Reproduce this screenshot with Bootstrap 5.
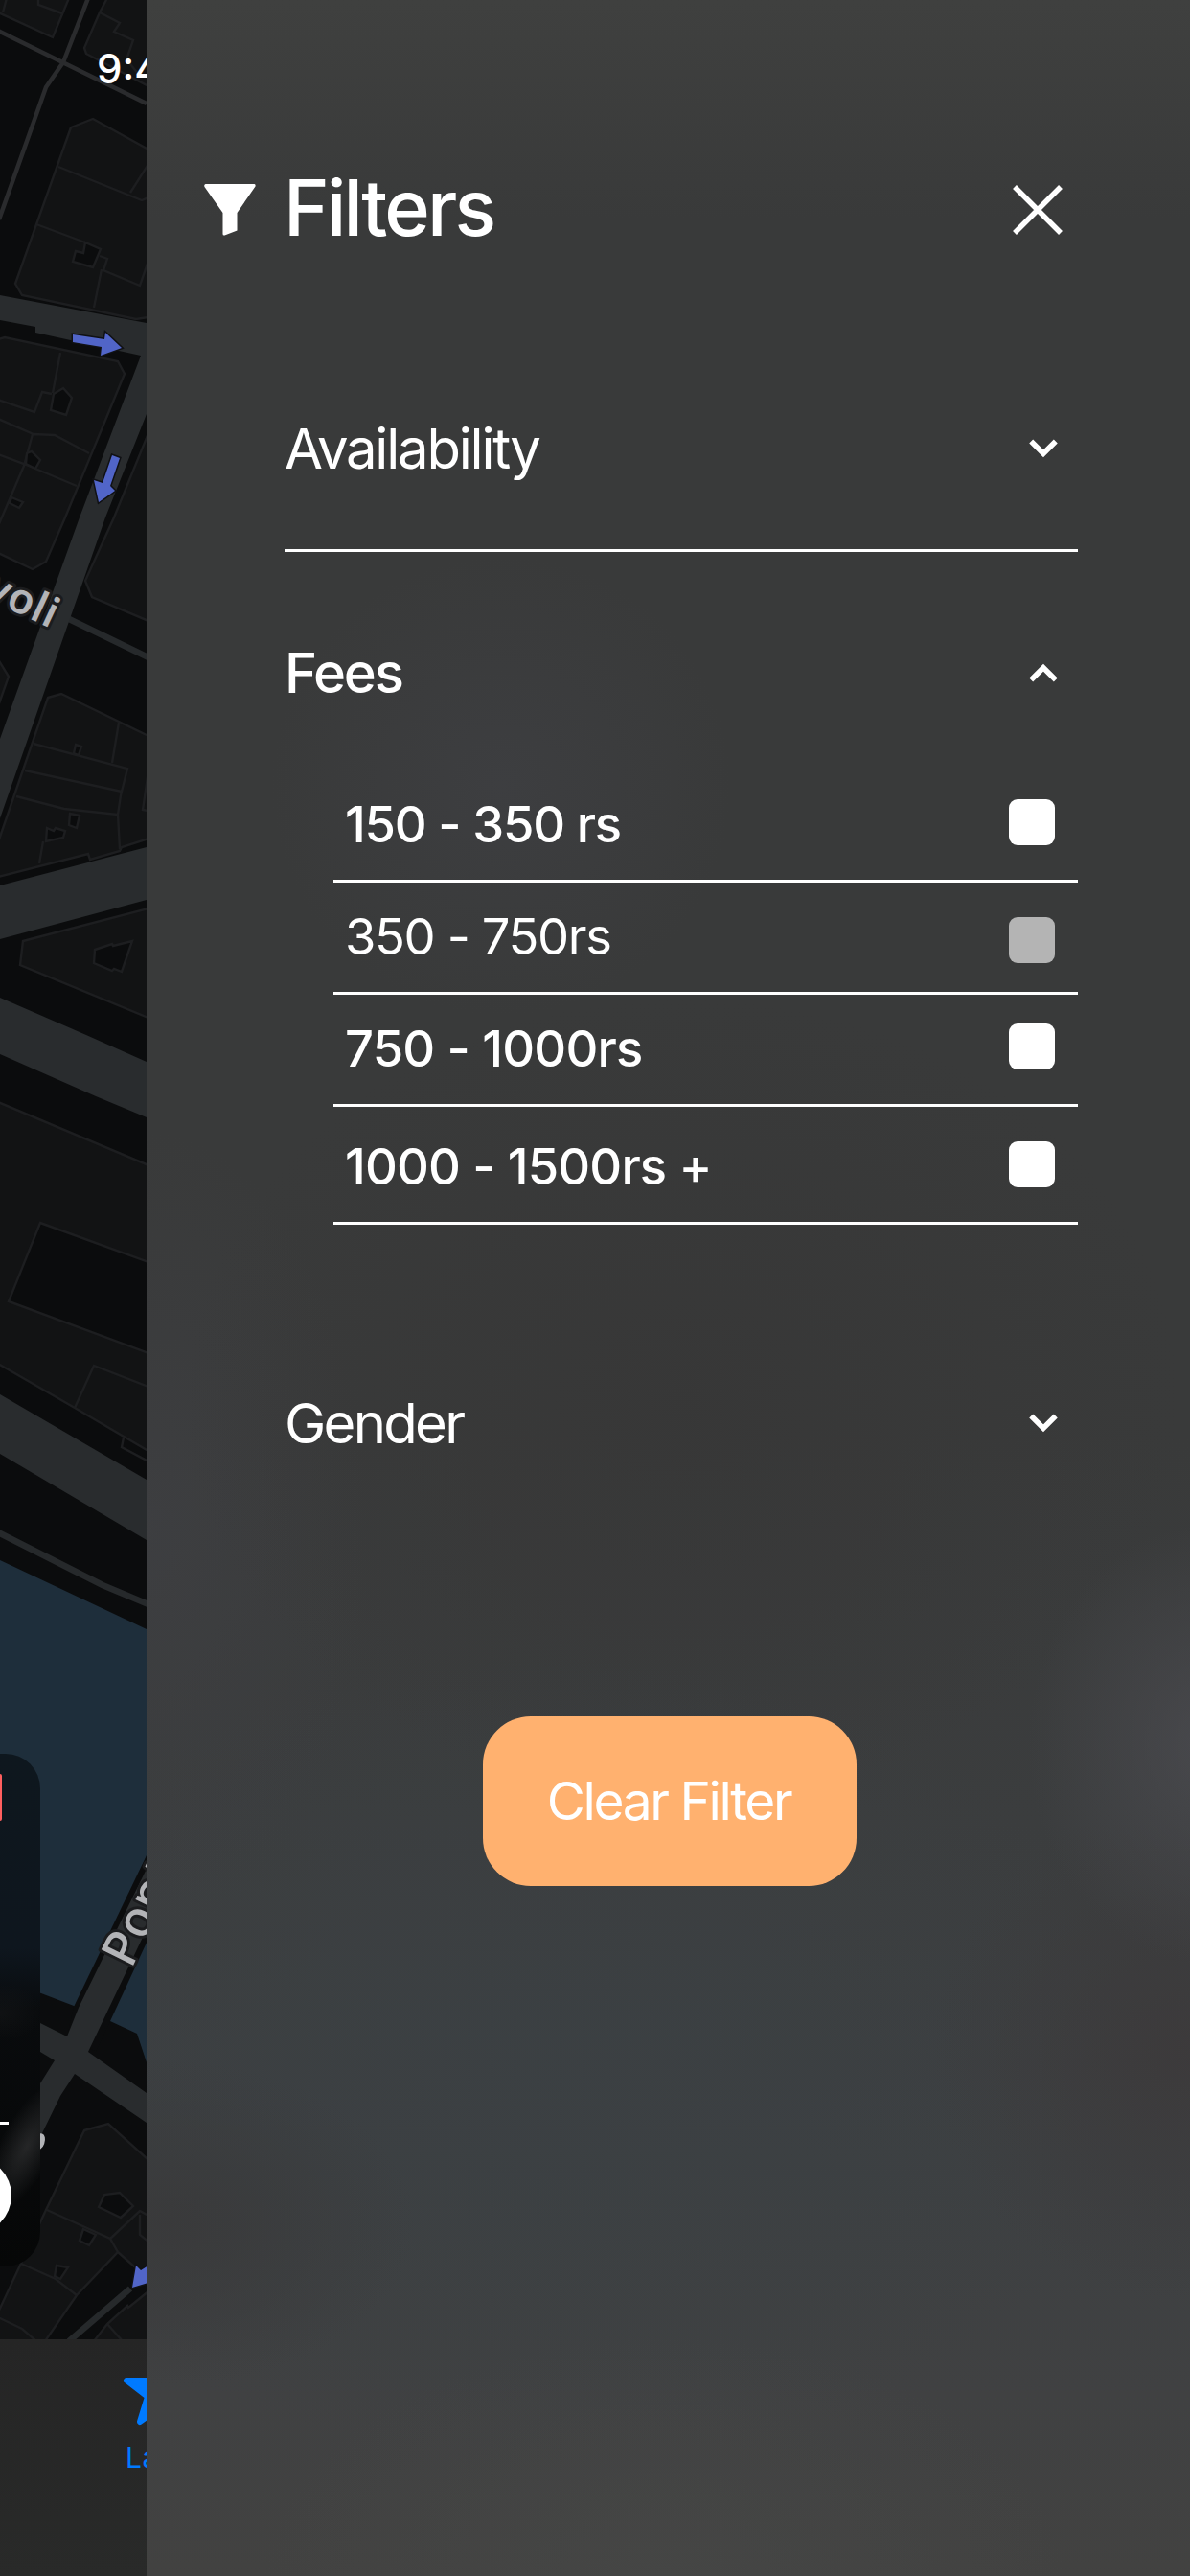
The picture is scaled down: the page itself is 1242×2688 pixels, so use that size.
<!DOCTYPE html>
<html lang="en">
<head>
<meta charset="utf-8">
<meta name="viewport" content="width=device-width, initial-scale=1">
<title>Filters</title>
<link href="https://cdn.jsdelivr.net/npm/bootstrap@5.3.0/dist/css/bootstrap.min.css" rel="stylesheet">
<style>
html,body{margin:0;height:2688px;overflow:hidden}
body{font-family:Inter,"Liberation Sans",sans-serif;background:#0b0c0d;color:#fff}
.screen{width:1242px;height:2688px}

/* Visible part of the page behind the drawer */
.map-strip{width:153px;flex:0 0 153px;overflow:hidden}
.map-strip svg{display:block}
.tab-strip{height:247px;background:linear-gradient(#252525,#292a29);color:#007aff;padding:37px 0 0 127px}
.tab-strip span{font-size:30px;line-height:36px;margin:12px 0 0 4px;letter-spacing:.6px}

/* Drawer */
.filter-panel{flex:1 1 0;min-width:0;background:
 radial-gradient(ellipse 190px 230px at 1110px 1820px,rgba(76,76,81,.75),rgba(76,76,81,0)),
 radial-gradient(ellipse 260px 260px at 1080px 2140px,rgba(60,57,58,.8),rgba(60,57,58,0)),
 radial-gradient(ellipse 260px 170px at 20px 2320px,rgba(57,57,58,.9),rgba(57,57,58,0)),
 radial-gradient(ellipse 420px 260px at 540px 2700px,rgba(70,71,70,.8),rgba(70,71,70,0)),
 radial-gradient(ellipse 620px 420px at 420px 2150px,rgba(59,64,67,.9),rgba(59,64,67,0)),
 radial-gradient(ellipse 520px 420px at 560px 1460px,rgba(55,55,55,.9),rgba(55,55,55,0)),
 radial-gradient(ellipse 230px 420px at 0 1600px,rgba(62,63,66,.8),rgba(62,63,66,0)),
 radial-gradient(ellipse 240px 240px at 370px 820px,rgba(62,63,66,.8),rgba(62,63,66,0)),
 linear-gradient(#3f403f,#393a3a 230px,#393a3a 1500px,#3b3d3e 1900px,#3d4042 2250px,#404142 2500px,#424241 2688px)}
.panel-head{height:428px;padding:157px 133px 0 60px}
.panel-head h1{font-size:81px;line-height:120px;font-weight:500;margin:0 auto 0 29px;letter-spacing:-2.8px}
.panel-head svg{margin-top:35px}
.filter-group{margin:0 117px 0 144px}
.group-row{height:80px;padding-right:21px;font-size:58px;line-height:80px;letter-spacing:-2.2px}
.avail{height:148px;border-bottom:3px solid #fff}
.fees{margin-top:86px;height:157px}
.fees .group-row,.fee-list{font-weight:500}
.fee-list{margin:0 117px 0 195px;font-size:52.5px}
.fee-row{border-bottom:3px solid #fff;height:117px;padding:26px 24px 0 12px;line-height:60px;letter-spacing:-.8px}
.fee-row i{width:48px;height:48px;border-radius:9px;background:#fff;margin-top:4px}
.fee-row.first{height:102px;padding-top:11px;letter-spacing:-1.2px}
.fee-row.dim{font-weight:400;letter-spacing:-1.4px}
.fee-row.dim i{background:#b4b4b4;margin-top:10px}
.fee-row.last{height:123px;padding-top:32px;letter-spacing:-.85px}
.gender{margin-top:167px;height:346px}
.gender .group-row{letter-spacing:-2.7px}
.clear-btn,.clear-btn:hover{margin-left:351px;width:390px;height:177px;border:0;border-radius:50px;background:#ffb16f;color:#fff;font-size:55px;letter-spacing:-2.4px;padding:0 2px 0 0}
</style>
</head>
<body>
<div class="screen d-flex">
<aside class="map-strip d-flex flex-column">
<svg width="153" height="2441" viewBox="0 0 153 2441">
 <defs>
  <linearGradient id="cardFill" x1="0" y1="0" x2="0" y2="1">
   <stop offset="0" stop-color="#0e171e"/><stop offset=".38" stop-color="#0e161e"/><stop offset=".5" stop-color="#090b0d"/><stop offset="1" stop-color="#060707"/>
  </linearGradient>
  <radialGradient id="cardGlow"><stop offset="0" stop-color="#252627"/><stop offset="1" stop-color="#252627" stop-opacity="0"/></radialGradient>
  <clipPath id="cardClip"><rect x="-80" y="1830" width="122" height="535" rx="36"/></clipPath>
 </defs>
 <rect width="153" height="2441" fill="#0b0c0d"/>
 <!-- building blocks -->
 <g fill="#121314" stroke="#1d1e20" stroke-width="2.4">
  <path d="M-2-2V13L55 39 72-2Z"/><path d="M7-2 3 13M40-2V5L65 14" fill="none"/>
  <path d="M112-2 104 13 88 50 90 56 155 90V-2Z"/><path d="M104 13 125 24 119 33 139 42 132 62 145 78" fill="none"/>
  <path d="M74 133 97 124 155 156V331L142 333 23 308 16 296Z"/>
  <path d="M61 174 148 209 155 206M155 171 136 201M38 234 89 253M104 267 112 270 108 282 146 298 155 272M106 281 98 321" fill="none"/>
  <path d="M-2 354 5 352 123 377 130 390 68 540 48 586 34 594-2 577Z"/>
  <path d="M63 368 55 410M-2 417 36 430 44 409 54 411M-2 437 35 453 57 454 93 473M34 453 25 486-2 549M-2 474 25 484 80 507" fill="none"/>
  <path d="M155 452 119 540 89 606 96 623 155 648Z"/>
  <path d="M-2 688 9 706-2 737Z"/>
  <path d="M50 728 64 724 155 768V875L127 884 125 888 94 897 92 891-2 915V879Z"/>
  <path d="M124 754 117 796M35 776 133 802 126 830 123 850 125 886M26 804 127 826M17 831 67 844 123 850M45 878 41 901M155 804 149 845 155 846" fill="none"/>
  <path d="M24 982 155 948V1062L21 1007Z"/>
  <path d="M-2 1150 155 1216V1514L78 1469-2 1423Z"/>
  <path d="M155 1447 98 1425 78 1469M129 1500 127 1510 155 1525" fill="none"/>
  <path d="M88 2223 113 2216 155 2254V2378L123 2350 80 2395 47 2443H-2V2413L48 2306Z"/>
  <path d="M49 2306 115 2336 123 2350M115 2336 146 2307 155 2312M146 2311V2332L155 2339M22 2362 58 2378 80 2395M-2 2418 23 2430 38 2443" fill="none"/>
  <path d="M155 2391 134 2408 133 2406 112 2425 98 2443H155Z"/><path d="M112 2425 128 2443" fill="none"/>
 </g>
 <!-- courtyards -->
 <g fill="#0b0c0d" stroke="#1d1e20" stroke-width="2.4">
  <path d="M79 262 87 264 89 253 105 260 97 279 76 273Z"/>
  <path d="M56 411 66 405 75 415 69 433 53 428Z"/><path d="M28 473 33 471 42 480 37 489 27 484Z"/><path d="M12 519 24 524 20 530 10 525Z"/>
  <path d="M79 777 85 779 82 788 77 786Z"/><path d="M73 849 83 851 80 864 72 861Z"/><path d="M49 864 56 867 58 864 68 867 66 874 48 878Z"/>
  <path d="M99 991 117 985 118 987 138 982 127 1014 119 1011 117 1013 98 1005Z"/>
  <path d="M42 1276 155 1317V1412L9 1358Z"/>
  <path d="M103 2303 109 2290 125 2288 139 2302 126 2314Z"/><path d="M87 2326 100 2332 93 2343 83 2338Z"/><path d="M59 2364 71 2366 63 2378 57 2375Z"/>
 </g>
 <!-- river -->
 <path d="M0 1628 153 1700V2152L143 2122 115 2109 77 2093 43 2080 0 2066Z" fill="#1e2e3b"/>
 <path d="M153 1936 77 2094 70 2125 100 2141 115 2109 153 2027Z" fill="#0b0c0d"/>
 <!-- streets -->
 <g fill="none" stroke="#2a2b2d" stroke-width="4.5">
  <path d="M-2 32 153 108M92-2 66 65 48 91-1 229"/>
  <path d="M68 644 155 686M-2 1599 107 1654 155 1674M136 2388 72 2443" stroke-width="6.5" stroke="#26292b"/>
 </g>
 <g fill="#292c2e">
  <path d="M0 308 153 337V432L110 540 0 854V771L83 540 147 371 37 347V341L0 334Z"/>
  <path d="M0 924 153 884V939L0 980Z"/>
  <path d="M0 1041 90 1080 153 1108V1166L100 1144 0 1100Z"/>
  <path d="M0 1455 153 1544V1607L0 1517Z"/>
  <path d="M153 1950 82 2095 70 2125 42 2111V2141L57 2150 42 2174V2230L63 2187 78 2164 153 2215V2184L92 2141 132 2057 153 2013Z"/>
 </g>
 <!-- one-way arrows -->
 <g fill="#5165c8" stroke="#101114" stroke-width="3" paint-order="stroke">
  <path d="M76 349 109 354 110 347 127 363 105 371 106 362 76 357Z"/>
  <path d="M117 475 125 478 115 507 120 512 103 524 98 501 107 504Z"/>
  <path d="M142 2364 147 2369 155 2364V2382L138 2387Z"/>
 </g>
 <g font-family="Noto Sans,sans-serif" font-weight="600" fill="#b3b4b7" stroke="#1b1c1e" stroke-width="6" stroke-linejoin="round" paint-order="stroke">
  <text transform="translate(53 656) rotate(25)" font-size="44" text-anchor="end" letter-spacing=".5">Rivoli</text>
  <text transform="translate(137 2055) rotate(-64)" font-size="52" font-weight="500">Pont</text>
 </g>
 <ellipse cx="41" cy="2235" rx="5.500" ry="9" fill="#b3b4b7" transform="rotate(20 41 2235)"/>
 <!-- floating card -->
 <g clip-path="url(#cardClip)">
  <rect x="-80" y="1830" width="122" height="535" fill="url(#cardFill)"/>
  <ellipse cx="28" cy="2240" rx="28" ry="75" fill="url(#cardGlow)" transform="rotate(28 28 2240)"/>
  <ellipse cx="0" cy="2100" rx="45" ry="30" fill="url(#cardGlow)" opacity=".25"/>
  <rect x="-20" y="1851" width="22" height="49" rx="2" fill="#ff5f5f"/>
  <rect y="2214" width="9" height="3" fill="#fff"/>
  <circle cx="-28" cy="2291" r="40" fill="#fff"/>
 </g>
 <text x="101" y="87" font-family="Inter,sans-serif" font-size="42" font-weight="500" fill="#fff">9:41</text>
</svg>
<div class="tab-strip">
 <svg width="76" height="56" viewBox="127 2478 76 56"><path d="M132 2484H157L165 2463 173 2484H198L178 2502 185 2526 165 2514 146 2527 154 2501Z" fill="#007aff" stroke="#007aff" stroke-width="6" stroke-linejoin="round"/></svg>
 <span class="d-block text-nowrap">Latest</span>
</div>
</aside>
<main class="filter-panel">
 <header class="panel-head d-flex align-items-start">
  <svg width="54" height="54" viewBox="0 0 54 54"><path d="M1.500 0H52.500Q54 .5 53.500 2.500L34.500 30V48.500L21.500 53.500Q19.500 54 19.500 52V30L.5 3Q-.5 1 1.500 0Z" fill="#fff"/></svg>
  <h1>Filters</h1>
  <svg width="52" height="54" viewBox="0 0 52 54" role="img" aria-label="Close"><path d="M2 3 50 51M50 3 2 51" stroke="#fff" stroke-width="5.500"/></svg>
 </header>
 <section class="filter-group avail"><div class="group-row d-flex justify-content-between align-items-center"><span>Availability</span>
  <svg width="30" height="20" viewBox="0 0 30 20"><path d="M2.200 2.600 15 15.200 27.800 2.600" fill="none" stroke="#fff" stroke-width="5.600"/></svg></div></section>
 <section class="filter-group fees"><div class="group-row d-flex justify-content-between align-items-center"><span>Fees</span>
  <svg width="30" height="20" viewBox="0 0 30 20"><path d="M2.200 17.400 15 4.800 27.800 17.400" fill="none" stroke="#fff" stroke-width="5.600"/></svg></div></section>
 <div class="fee-list">
  <div class="fee-row first d-flex justify-content-between"><span>150 - 350 rs</span><i></i></div>
  <div class="fee-row dim d-flex justify-content-between"><span>350 - 750rs</span><i></i></div>
  <div class="fee-row d-flex justify-content-between"><span>750 - 1000rs</span><i></i></div>
  <div class="fee-row last d-flex justify-content-between"><span>1000 - 1500rs +</span><i></i></div>
 </div>
 <section class="filter-group gender"><div class="group-row d-flex justify-content-between align-items-center"><span>Gender</span>
  <svg width="30" height="20" viewBox="0 0 30 20"><path d="M2.200 2.600 15 15.200 27.800 2.600" fill="none" stroke="#fff" stroke-width="5.600"/></svg></div></section>
 <button type="button" class="btn clear-btn">Clear Filter</button>
</main>
</div>
<script src="https://cdn.jsdelivr.net/npm/bootstrap@5.3.0/dist/js/bootstrap.bundle.min.js"></script>
</body>
</html>
